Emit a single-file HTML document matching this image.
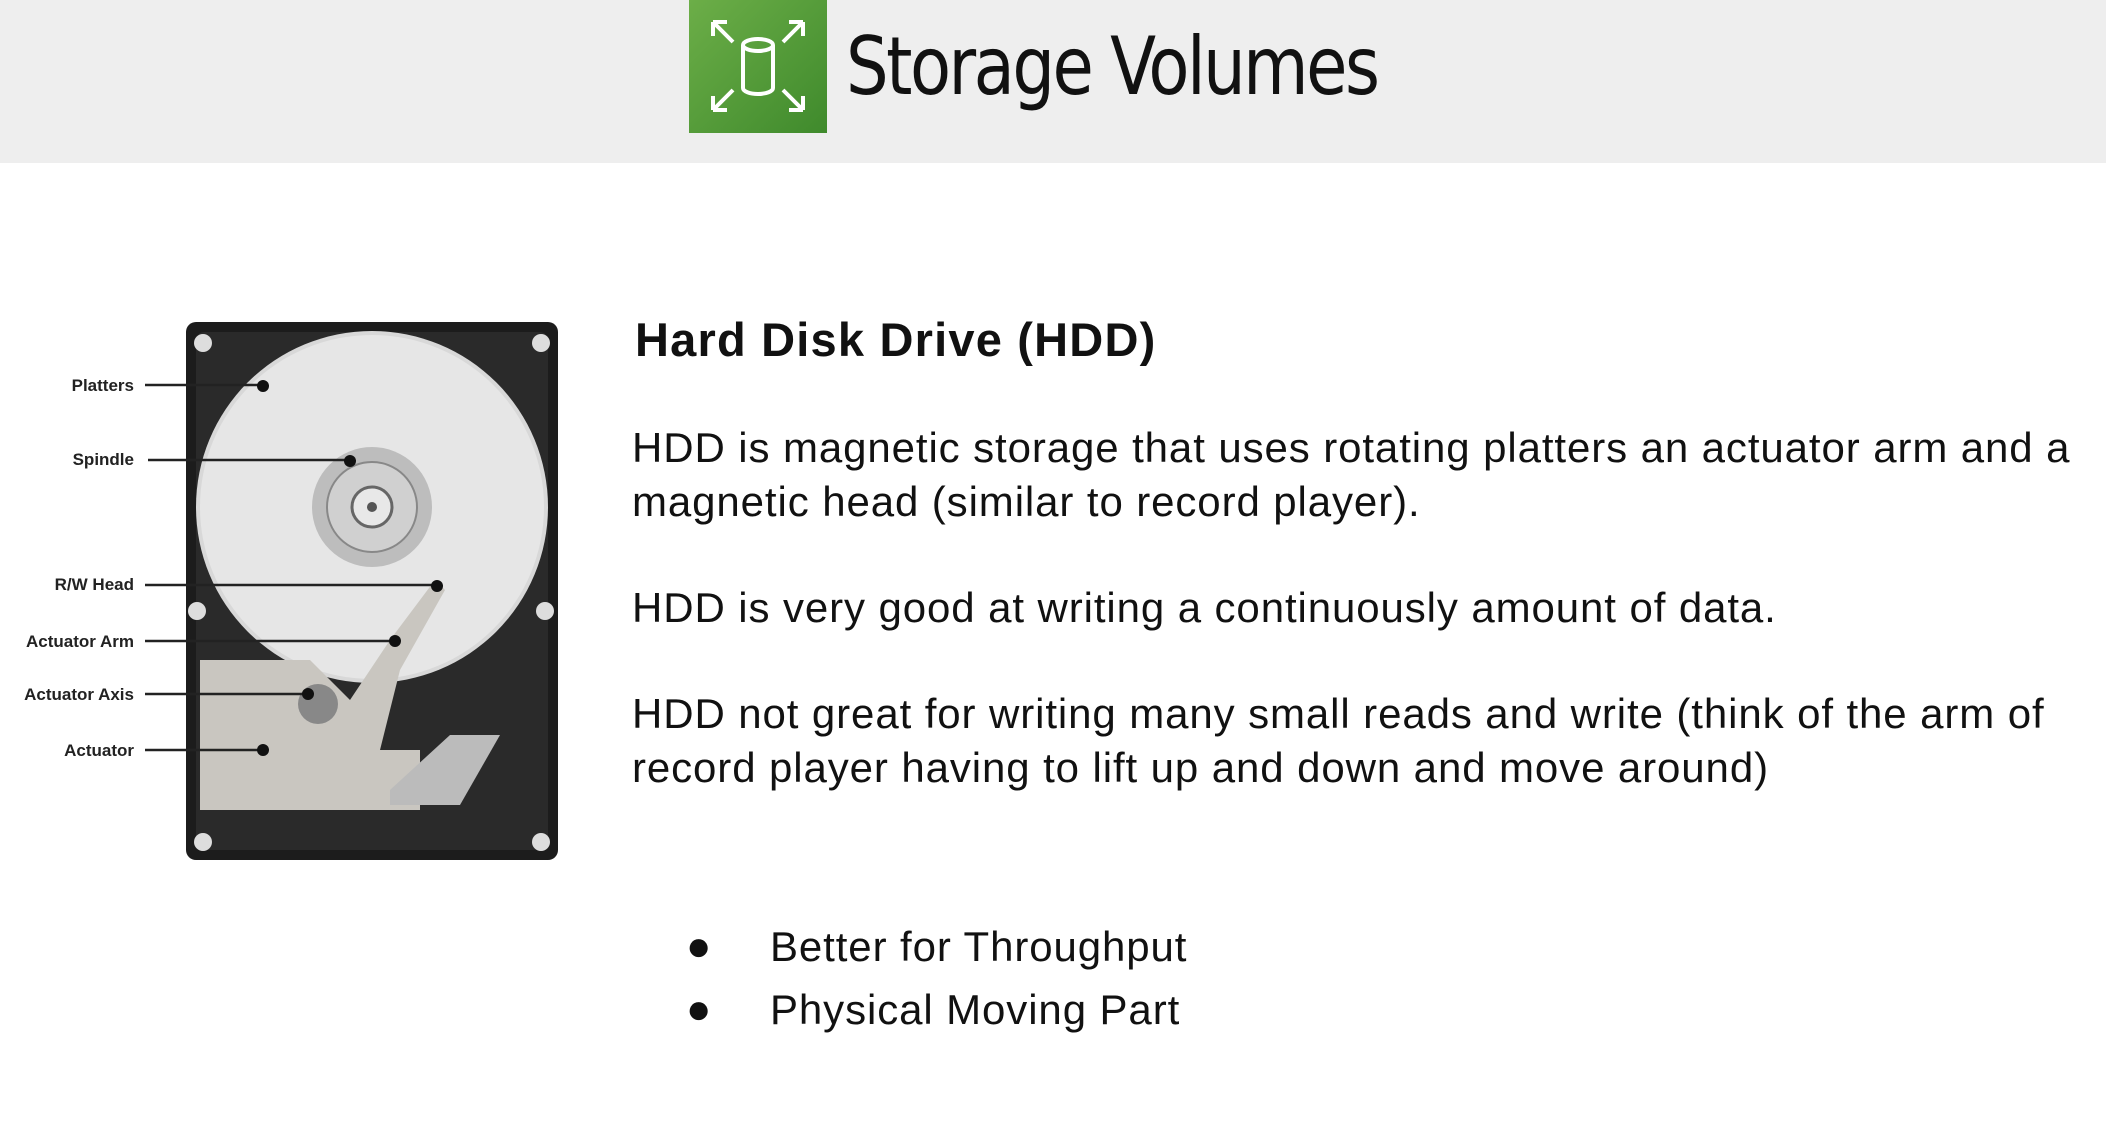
<!DOCTYPE html>
<html><head><meta charset="utf-8"><style>
*{margin:0;padding:0}
body{width:2106px;height:1146px;background:#fff;position:relative;overflow:hidden;font-family:"Liberation Sans",sans-serif;color:#111}
.hdr{position:absolute;left:0;top:0;width:2106px;height:163px;background:#eeeeee}
.logo{position:absolute;left:689px;top:0;width:138px;height:133px;background:linear-gradient(135deg,#6cae48,#3f8a2c)}
.title{position:absolute;left:846px;top:20px;font-size:80px;font-family:"DejaVu Sans","Liberation Sans",sans-serif;letter-spacing:-3px;transform:scaleX(0.84);transform-origin:left}
.t{position:absolute;white-space:nowrap}
.h{left:635px;top:312px;font-size:47px;font-weight:bold;letter-spacing:1.2px}
.p{left:632px;font-size:42px;letter-spacing:0.9px}
.lbl{position:absolute;font-size:17px;font-weight:bold;color:#222;text-align:right;width:134px;left:0}
</style></head><body>
<div class="hdr"></div>
<div class="logo"><svg width="138" height="133" viewBox="0 0 138 133" fill="none" stroke="#fff" stroke-width="4">
<path d="M24 22 L44 42 M24 22 v14 M24 22 h14"/>
<path d="M114 22 L94 42 M114 22 v14 M114 22 h-14"/>
<path d="M24 110 L44 90 M24 110 v-14 M24 110 h14"/>
<path d="M114 110 L94 90 M114 110 v-14 M114 110 h-14"/>
<ellipse cx="69" cy="45" rx="15" ry="6"/>
<path d="M54 45 v43 a15 6 0 0 0 30 0 v-43"/>
</svg></div>
<div class="title">Storage Volumes</div>

<svg style="position:absolute;left:0;top:0" width="600" height="900">
<rect x="186" y="322" width="372" height="538" rx="10" fill="#1c1c1c"/>
<rect x="196" y="332" width="352" height="518" rx="8" fill="#2a2a2a"/>
<circle cx="372" cy="507" r="176" fill="#d8d8d8"/>
<circle cx="372" cy="507" r="172" fill="#e6e6e6"/>
<circle cx="372" cy="507" r="60" fill="#bdbdbd"/>
<circle cx="372" cy="507" r="45" fill="#d0d0d0" stroke="#888" stroke-width="2"/>
<circle cx="372" cy="507" r="20" fill="#e8e8e8" stroke="#666" stroke-width="3"/>
<circle cx="372" cy="507" r="5" fill="#555"/>
<path d="M200 660 h110 l40 40 l40 -60 l45 -60 l10 10 l-45 80 l-20 80 h40 v60 h-220 z" fill="#c9c6c0"/>
<path d="M390 790 l60 -55 h50 l-40 70 h-70 z" fill="#bbb"/>
<circle cx="318" cy="704" r="20" fill="#888"/>
<g fill="#ddd"><circle cx="203" cy="343" r="9"/><circle cx="541" cy="343" r="9"/><circle cx="203" cy="842" r="9"/><circle cx="541" cy="842" r="9"/><circle cx="197" cy="611" r="9"/><circle cx="545" cy="611" r="9"/></g>
<g stroke="#222" stroke-width="2.5">
<line x1="145" y1="385" x2="263" y2="385"/><line x1="148" y1="460" x2="350" y2="460"/>
<line x1="145" y1="585" x2="437" y2="585"/><line x1="145" y1="641" x2="395" y2="641"/>
<line x1="145" y1="694" x2="308" y2="694"/><line x1="145" y1="750" x2="263" y2="750"/>
</g>
<g fill="#111"><circle cx="263" cy="386" r="6"/><circle cx="350" cy="461" r="6"/><circle cx="437" cy="586" r="6"/><circle cx="395" cy="641" r="6"/><circle cx="308" cy="694" r="6"/><circle cx="263" cy="750" r="6"/></g>
</svg>
<div class="lbl" style="top:376px">Platters</div>
<div class="lbl" style="top:450px">Spindle</div>
<div class="lbl" style="top:575px">R/W Head</div>
<div class="lbl" style="top:632px">Actuator Arm</div>
<div class="lbl" style="top:685px">Actuator Axis</div>
<div class="lbl" style="top:741px">Actuator</div>

<div class="t h">Hard Disk Drive (HDD)</div>
<div class="t p" style="top:424px">HDD is magnetic storage that uses rotating platters an actuator arm and a</div>
<div class="t p" style="top:478px">magnetic head (similar to record player).</div>
<div class="t p" style="top:584px">HDD is very good at writing a continuously amount of data.</div>
<div class="t p" style="top:690px">HDD not great for writing many small reads and write (think of the arm of</div>
<div class="t p" style="top:744px">record player having to lift up and down and move around)</div>
<div class="t p" style="left:686px;top:922px">●</div>
<div class="t p" style="left:770px;top:923px">Better for Throughput</div>
<div class="t p" style="left:686px;top:985px">●</div>
<div class="t p" style="left:770px;top:986px">Physical Moving Part</div>
</body></html>
